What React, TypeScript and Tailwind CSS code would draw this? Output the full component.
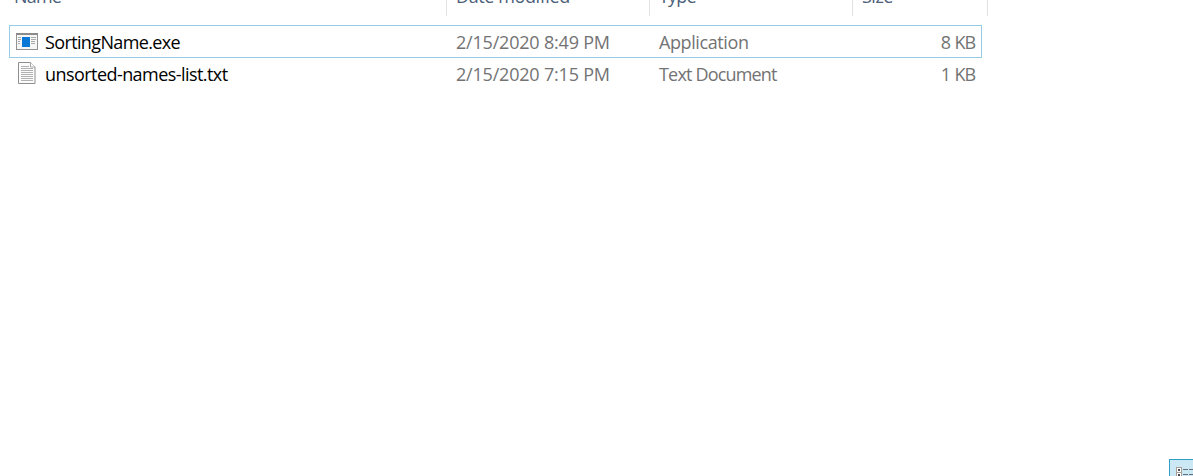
type FileEntry = {
  name: string;
  nameSpacing: string;
  modified: string;
  type: string;
  typeSpacing: string;
  size: string;
  kind: "exe" | "txt";
  frame: string;
};

const files: FileEntry[] = [
  {
    name: "SortingName.exe",
    nameSpacing: "tracking-[-0.63px]",
    modified: "2/15/2020 8:49 PM",
    type: "Application",
    typeSpacing: "tracking-[-0.4px]",
    size: "8 KB",
    kind: "exe",
    frame: "border-[#95cde2]",
  },
  {
    name: "unsorted-names-list.txt",
    nameSpacing: "tracking-[-0.56px]",
    modified: "2/15/2020 7:15 PM",
    type: "Text Document",
    typeSpacing: "tracking-[-0.82px]",
    size: "1 KB",
    kind: "txt",
    frame: "-mt-px border-transparent",
  },
];

function ExeIcon() {
  return (
    <svg width="22" height="17" viewBox="0 0 22 17" shapeRendering="crispEdges">
      <rect x="0.5" y="0.5" width="21" height="16" fill="#f6f6f6" stroke="#929292" />
      <rect x="0" y="0" width="22" height="2" fill="#8b8b8b" />
      <rect x="6" y="4" width="8" height="10" fill="#0877d6" />
      <path
        d="M2 4.5h3M2 6.5h3M2 8.5h2M2 10.5h2M15 4.5h5M15 6.5h5M15 8.5h4M15 10.5h4"
        stroke="#aaaaaa"
      />
    </svg>
  );
}

function TextIcon() {
  return (
    <svg width="18" height="22" viewBox="0 0 18 22" className="-mt-[2px]">
      <path d="M.5.5h12l4.5 4.5v16.500H.5z" fill="#fcfcfc" stroke="#8f8f8f" />
      <path d="M12.500.5v4.500H17" fill="#fff" stroke="#a5a5a5" />
      <path
        d="M3 4.500h8M3 6.500h12M3 8.500h12M3 10.500h12M3 12.500h12M3 14.500h12M3 16.500h12M3 18.500h12"
        stroke="#b2b2b2"
      />
    </svg>
  );
}

function Header() {
  return (
    <header className="flex h-4 overflow-hidden text-[#4c607a]">
      <div className="flex h-4 w-[447px] border-r border-[#e2e2e2] pl-[14px]">
        <span className="-mt-[16px] leading-6 tracking-[-0.8px]">Name</span>
      </div>
      <div className="flex h-4 w-[203px] border-r border-[#e2e2e2] pl-[9px]">
        <span className="-mt-[16px] leading-6 tracking-[-0.4px]">Date modified</span>
      </div>
      <div className="flex h-4 w-[203px] border-r border-[#e2e2e2] pl-[9px]">
        <span className="-mt-[16px] leading-6 tracking-[-0.8px]">Type</span>
      </div>
      <div className="flex h-4 w-[135px] border-r border-[#e2e2e2] pl-[9px]">
        <span className="-mt-[16px] leading-6 tracking-[-0.5px]">Size</span>
      </div>
    </header>
  );
}

function FileRow({ file }: { file: FileEntry }) {
  return (
    <div
      className={`flex h-[33px] w-[973px] items-center border text-[#737373] ${file.frame}`}
    >
      <div className="flex w-[446px] items-center">
        <span className="flex w-[35px] justify-center pr-[1px]">
          {file.kind === "exe" ? <ExeIcon /> : <TextIcon />}
        </span>
        <span className={`pt-px text-black ${file.nameSpacing}`}>{file.name}</span>
      </div>
      <span className="w-[203px] pt-px tracking-[-0.2px]">{file.modified}</span>
      <span className={`w-[203px] pt-px ${file.typeSpacing}`}>{file.type}</span>
      <span className="flex-1 pt-px pr-[6px] text-right tracking-[-1.1px] [word-spacing:1px]">
        {file.size}
      </span>
    </div>
  );
}

export default function App() {
  return (
    <main className="flex h-[476px] w-[1193px] flex-col overflow-hidden bg-white font-['Open_Sans','Noto_Sans',sans-serif] text-[18px] leading-6 whitespace-nowrap">
      <Header />
      <section className="mt-[9px] flex flex-col pl-[9px]">
        {files.map((file) => (
          <FileRow key={file.name} file={file} />
        ))}
      </section>
      <footer className="mt-auto flex justify-end">
        <div className="h-[17px] w-6 overflow-hidden border-t border-l border-[#2f9fc6] bg-[#cde8f5]">
          <svg width="23" height="16" viewBox="0 0 23 16" shapeRendering="crispEdges">
            <path d="M6.500 7.500h5v5h-5zM6.500 12.500h5v5h-5z" fill="#fff" stroke="#a6a098" />
            <path d="M8 9h2v2H8zM8 14h2v2H8z" fill="#4b4b55" />
            <path d="M13 9.500h5M19 9.500h4M13 14.500h5M19 14.500h4" stroke="#65717a" />
          </svg>
        </div>
      </footer>
    </main>
  );
}
